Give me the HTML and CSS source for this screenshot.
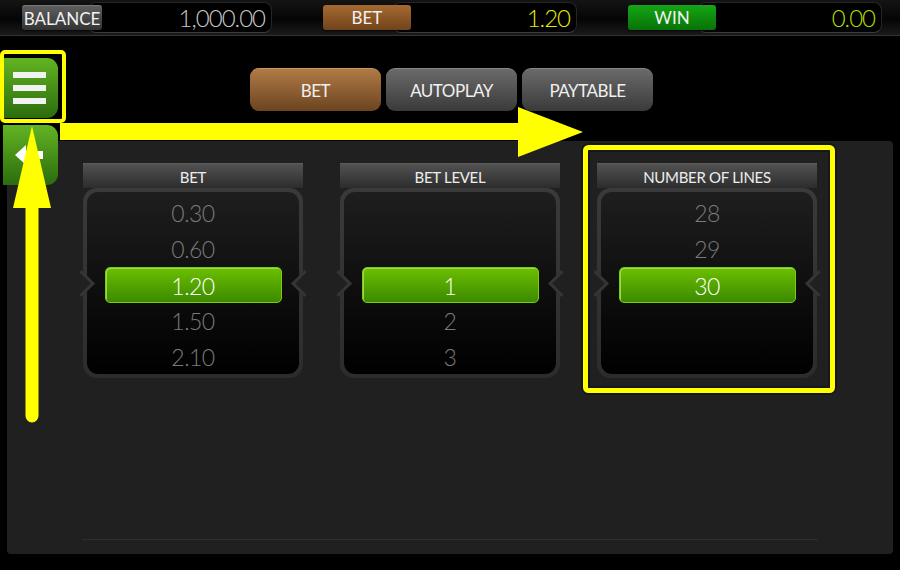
FILE: index.html
```html
<!DOCTYPE html>
<html lang="en">
<head>
  <meta charset="UTF-8">
  <title>Bet Settings</title>
  <link rel="stylesheet" href="styles.css">
</head>
<body>
  <div class="topbar">
    <div class="meter">
      <span class="label grey">BALANCE</span>
      <span class="value wide">1,000.00</span>
    </div>
    <div class="meter">
      <span class="label brown">BET</span>
      <span class="value yellow">1.20</span>
    </div>
    <div class="meter">
      <span class="label green">WIN</span>
      <span class="value lime">0.00</span>
    </div>
  </div>

  <div class="tabs">
    <button class="tab active">BET</button>
    <button class="tab">AUTOPLAY</button>
    <button class="tab">PAYTABLE</button>
  </div>

  <div class="panel">
    <div class="columns">
      <div class="col">
        <div class="col-head">BET</div>
        <div class="wheel">
          <div class="wheel-in">
            <div class="item">0.30</div>
            <div class="item">0.60</div>
            <div class="item sel">1.20</div>
            <div class="item">1.50</div>
            <div class="item">2.10</div>
          </div>
        </div>
      </div>
      <div class="col">
        <div class="col-head">BET LEVEL</div>
        <div class="wheel">
          <div class="wheel-in">
            <div class="item"></div>
            <div class="item"></div>
            <div class="item sel">1</div>
            <div class="item">2</div>
            <div class="item">3</div>
          </div>
        </div>
      </div>
      <div class="col">
        <div class="col-head">NUMBER OF LINES</div>
        <div class="wheel">
          <div class="wheel-in">
            <div class="item">28</div>
            <div class="item">29</div>
            <div class="item sel">30</div>
            <div class="item"></div>
            <div class="item"></div>
          </div>
        </div>
      </div>
    </div>
    <div class="bottom-line"></div>
  </div>

  <button class="side-btn menu-btn">
    <span class="bar"></span>
    <span class="bar"></span>
    <span class="bar"></span>
  </button>
  <button class="side-btn back-btn">
    <svg width="55" height="60" viewBox="0 0 55 60">
      <polygon points="12,30 23,20 23,26 40,26 40,34 23,34 23,40" fill="#fff"/>
    </svg>
  </button>

  <!-- tutorial markers drawn over the ui -->
  <svg class="marks" width="900" height="570" viewBox="0 0 900 570">
    <rect x="2" y="52" width="62" height="69" rx="3" fill="none" stroke="#ffff00" stroke-width="4"/>
    <path d="M60 123 L518 123 L518 107 L583 132 L518 157 L518 140 L60 140 Z" fill="#ffff00"/>
    <path d="M32 126 L51 208 L38.5 208 L38.5 416 A6.5 6.5 0 0 1 25.5 416 L25.5 208 L13 208 Z" fill="#ffff00"/>
    <rect x="585.5" y="147.5" width="247" height="243" rx="3" fill="none" stroke="#111" stroke-width="9" opacity="0.6"/>
    <rect x="585.5" y="147.5" width="247" height="243" rx="3" fill="none" stroke="#ffff00" stroke-width="5"/>
  </svg>
</body>
</html>
```

FILE: styles.css
```css
body {
  margin: 0;
  width: 900px;
  height: 570px;
  overflow: hidden;
  position: relative;
  background: #000;
  color: #eee;
  font-family: "Lato", "DejaVu Sans", sans-serif;
  display: flex;
  flex-direction: column;
}
.topbar {
  height: 35px;
  border-bottom: 1px solid #333;
  background: linear-gradient(#141414, #050505 55%, #1a1a1a);
  display: flex;
  align-items: center;
  gap: 51px;
  padding-left: 22px;
}
.meter {
  display: flex;
  align-items: center;
}
.label {
  position: relative;
  z-index: 1;
  height: 25px;
  line-height: 26px;
  font-size: 17px;
  text-align: center;
  color: #f2f2f2;
  border-radius: 3px;
  box-shadow: 0 1px 2px rgba(0,0,0,0.7);
}
.label.grey {
  width: 80px;
  background: linear-gradient(#5e5e5e, #333);
  border-top: 1px solid #777;
  height: 24px;
}
.label.brown {
  width: 88px;
  background: linear-gradient(#a66a30, #70431a);
}
.label.green {
  width: 88px;
  background: linear-gradient(#16a616, #077207);
}
.value {
  width: 176px;
  height: 29px;
  margin-left: -18px;
  padding-right: 6px;
  background: #000;
  border: 1px solid #262626;
  border-bottom-color: #3c3c3c;
  border-radius: 8px;
  text-align: right;
  line-height: 30px;
  font-size: 24px;
  font-weight: 300;
  letter-spacing: -1px;
  color: #c8c8c8;
}
.value.wide {
  margin-left: -14px;
}
.value.yellow {
  color: #e8e800;
}
.value.lime {
  color: #b4dc00;
}
.tabs {
  display: flex;
  justify-content: center;
  gap: 5px;
  margin-top: 32px;
  padding-left: 3px;
}
.tab {
  width: 131px;
  height: 43px;
  border: none;
  border-top: 1px solid #888;
  border-radius: 9px;
  background: linear-gradient(#6a6a6a, #3a3a3a);
  color: #f0f0f0;
  font-family: inherit;
  font-size: 17px;
  letter-spacing: -0.5px;
  box-shadow: 0 1px 2px rgba(0,0,0,0.8);
}
.tab.active {
  border-top-color: #c89460;
  background: linear-gradient(#b07a45, #6c4420);
}
.panel {
  margin: 30px 7px 0;
  height: 391px;
  padding-top: 22px;
  background: #202020;
  border-radius: 4px;
  display: flex;
  flex-direction: column;
}
.columns {
  display: flex;
  justify-content: center;
  gap: 37px;
}
.col {
  width: 220px;
}
.col-head {
  height: 25px;
  line-height: 27px;
  text-align: center;
  font-size: 15px;
  letter-spacing: -0.3px;
  color: #eee;
  background: linear-gradient(#525252, #2c2c2c);
  border-top: 1px solid #5c5c5c;
  box-sizing: border-box;
}
.wheel {
  position: relative;
  height: 190px;
  padding: 4px;
  box-sizing: border-box;
  background: linear-gradient(#3a3a3a, #2c2c2c);
  border-radius: 14px;
}
.wheel::before,
.wheel::after {
  content: "";
  position: absolute;
  top: 86px;
  width: 16px;
  height: 16px;
  background: #202020;
  transform: rotate(45deg);
  border: 0 solid #353535;
}
.wheel::before {
  left: -11px;
  border-top-width: 3px;
  border-right-width: 3px;
}
.wheel::after {
  right: -11px;
  border-bottom-width: 3px;
  border-left-width: 3px;
}
.wheel-in {
  height: 182px;
  padding-top: 3px;
  box-sizing: border-box;
  overflow: hidden;
  border-radius: 11px;
  background: linear-gradient(#1e1e1e, #0c0c0c 60%, #000);
}
.item {
  height: 36px;
  line-height: 36px;
  text-align: center;
  font-size: 23px;
  font-weight: 300;
  letter-spacing: -0.5px;
  color: #7a7a7a;
}
.item.sel {
  position: relative;
  z-index: 1;
  width: 177px;
  margin: 0 auto;
  box-sizing: border-box;
  border: 1px solid #7ccc10;
  border-radius: 5px;
  background: linear-gradient(#6cbf00, #3c8a00);
  color: #fff;
  box-shadow: 1px 1px 0 #9ad94a inset;
}
.bottom-line {
  margin: auto auto 14px;
  width: 736px;
  height: 1px;
  background: #2e2e2e;
}
.side-btn {
  position: absolute;
  left: 3px;
  width: 55px;
  height: 60px;
  padding: 0;
  border: none;
  border-radius: 0 11px 11px 0;
  background: linear-gradient(#62b422, #2c6c0e);
}
.menu-btn {
  top: 58px;
  display: flex;
  flex-direction: column;
  justify-content: center;
  align-items: flex-start;
  gap: 7px;
  padding-left: 10px;
}
.menu-btn .bar {
  width: 33px;
  height: 6px;
  background: #f2f2f2;
}
.back-btn {
  top: 125px;
}
.back-btn svg {
  display: block;
}
.marks {
  position: absolute;
  left: 0;
  top: 0;
  pointer-events: none;
}
```
